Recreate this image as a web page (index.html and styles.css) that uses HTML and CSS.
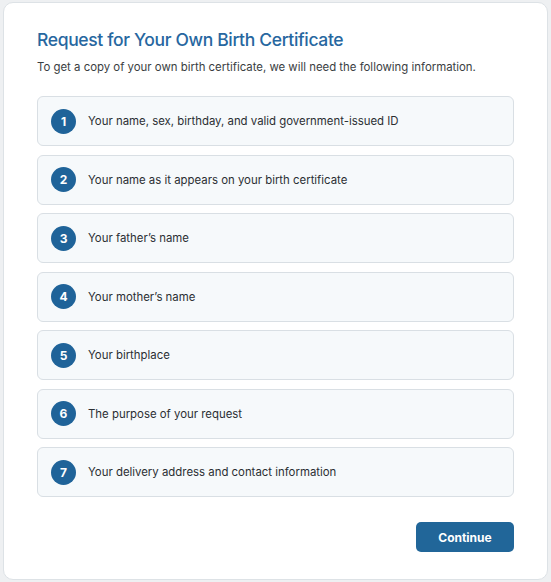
FILE: index.html
```html
<!DOCTYPE html>
<html lang="en">
<head>
<meta charset="utf-8">
<link rel="stylesheet" href="styles.css">
</head>
<body>
<main class="card">
  <h1 class="title">Request for Your Own Birth Certificate</h1>
  <p class="lead">To get a copy of your own birth certificate, we will need the following information.</p>
  <ol class="steps">
    <li class="step"><span class="num">1</span><span class="label">Your name, sex, birthday, and valid government-issued ID</span></li>
    <li class="step"><span class="num">2</span><span class="label">Your name as it appears on your birth certificate</span></li>
    <li class="step"><span class="num">3</span><span class="label">Your father’s name</span></li>
    <li class="step"><span class="num">4</span><span class="label">Your mother’s name</span></li>
    <li class="step"><span class="num">5</span><span class="label">Your birthplace</span></li>
    <li class="step"><span class="num">6</span><span class="label">The purpose of your request</span></li>
    <li class="step"><span class="num">7</span><span class="label">Your delivery address and contact information</span></li>
  </ol>
  <div class="actions">
    <button class="btn" type="button">Continue</button>
  </div>
</main>
</body>
</html>
```
FILE: styles.css
```css
* { box-sizing: border-box; }
html, body { margin: 0; padding: 0; }
body {
  background: #eef0f2;
  font-family: Inter, "Open Sans", sans-serif;
  color: #2b2f33;
  padding: 2px 3px;
}
.card {
  width: 545px;
  height: 578px;
  background: #fff;
  border: 1px solid #dde2e6;
  border-radius: 10px;
  padding: 26px 33px 0 33px;
}
.title {
  margin: 0;
  font-size: 17.5px;
  font-weight: 500;
  color: #2767a0;
  line-height: 22px;
  letter-spacing: -0.35px;
}
.lead {
  margin: 8px 0 0 0;
  font-size: 11.4px;
  line-height: 16px;
  color: #3a3e42;
}
.steps {
  list-style: none;
  margin: 21px 0 0 0;
  padding: 0;
  display: flex;
  flex-direction: column;
  gap: 8.5px;
}
.step {
  height: 50px;
  display: flex;
  align-items: center;
  gap: 12px;
  padding: 0 13px;
  background: #f6f9fb;
  border: 1px solid #d9dfe4;
  border-radius: 6px;
}
.num {
  width: 25px;
  height: 25px;
  flex: none;
  border-radius: 50%;
  background: #1f6399;
  color: #fff;
  font-size: 12px;
  font-weight: 700;
  display: flex;
  align-items: center;
  justify-content: center;
}
.label {
  font-size: 11.4px;
  color: #2b2f33;
}
.actions {
  display: flex;
  justify-content: flex-end;
  margin-top: 25px;
}
.btn {
  width: 98px;
  height: 30px;
  border: none;
  border-radius: 5px;
  background: #216699;
  color: #fff;
  font-family: Inter, "Open Sans", sans-serif;
  font-size: 12px;
  font-weight: 700;
  cursor: pointer;
}
```
